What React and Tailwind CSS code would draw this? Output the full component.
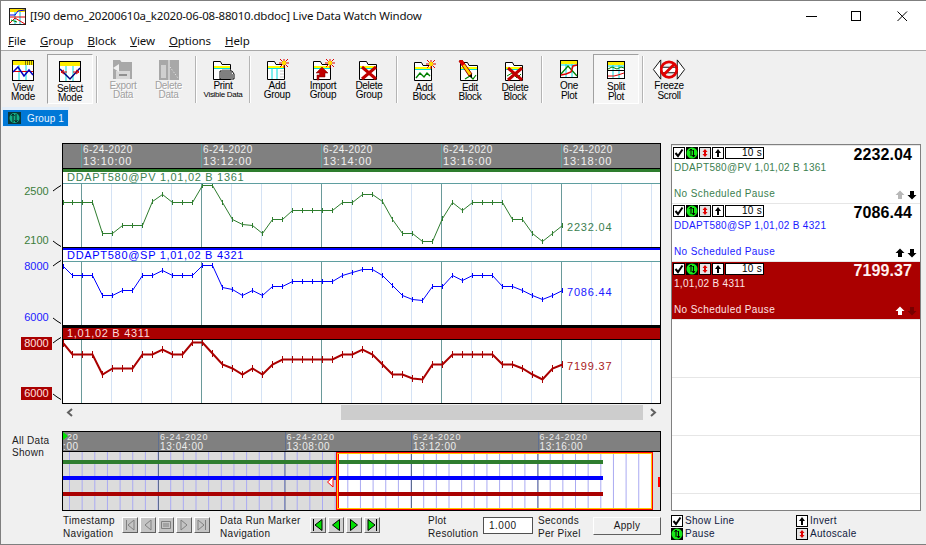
const green = [[63,202],[72,202],[82,202],[92,202],[102,233],[112,233],[122,225],[132,225],[142,225],[152,201],[162,194],[172,202],[182,202],[192,202],[202,185],[212,185],[222,202],[232,219],[242,224],[252,225],[262,233],[272,219],[282,219],[292,210],[302,210],[312,210],[322,210],[332,210],[342,202],[352,202],[362,194],[372,194],[382,201],[392,219],[402,233],[412,233],[422,241],[432,241],[442,218],[452,202],[462,210],[472,202],[482,202],[492,202],[502,202],[512,219],[522,219],[532,233],[542,241],[552,233],[562,225]];
const blue = [[63,266],[72,275],[82,275],[92,275],[102,295],[112,295],[122,290],[132,290],[142,275],[152,275],[162,270],[172,275],[182,275],[192,275],[202,265],[212,265],[222,287],[232,289],[242,295],[252,290],[262,295],[272,286],[282,286],[292,281],[302,281],[312,281],[322,281],[332,281],[342,275],[352,272],[362,269],[372,269],[382,275],[392,285],[402,295],[412,299],[422,300],[432,286],[442,286],[452,275],[462,280],[472,275],[482,275],[492,275],[502,286],[512,286],[522,290],[532,295],[542,299],[552,295],[562,290]];
const red = [[63,343],[72,354],[82,354],[92,354],[102,374],[112,368],[122,368],[132,368],[142,354],[152,354],[162,349],[172,354],[182,354],[192,342],[202,342],[212,353],[222,364],[232,368],[242,374],[252,368],[262,374],[272,364],[282,359],[292,359],[302,359],[312,359],[322,359],[332,359],[342,354],[352,354],[362,349],[372,354],[382,364],[392,374],[402,374],[412,378],[422,379],[432,364],[442,364],[452,354],[462,354],[472,354],[482,354],[492,354],[502,364],[512,364],[522,368],[532,374],[542,379],[552,368],[562,364]];

const minor = [];
for (let x = 81; x < 660; x += 30) minor.push(x);
const major = [81, 201, 321, 441, 561];

function Plot({ data, top, color, width, tick, value, valueClass, valueColor }) {
  const pts = data.map(([x, y]) => `${x - 62.5},${y - top + 0.5}`).join(" ");
  const ticks = data.map(([x, y]) => `M${x - 62.5} ${y - top - tick}V${y - top + tick + 1}`).join("");
  return (
    <div className="relative h-[63px] bg-white">
      <svg width="597" height="63" className="block">
        {minor.map((x) => (
          <line key={x} x1={x - 62.5} x2={x - 62.5} y1="0" y2="63" stroke="#d4e2f4" />
        ))}
        {major.map((x) => (
          <line key={x} x1={x - 62.5} x2={x - 62.5} y1="0" y2="63" stroke="#6a9a9a" />
        ))}
        <polyline points={pts} fill="none" stroke={color} strokeWidth={width} />
        <path d={ticks} fill="none" stroke={color} strokeWidth="1" />
      </svg>
      <span className={`absolute left-[504px] h-[12px] leading-[12px] text-[11px] tracking-[0.8px] ${valueClass} ${valueColor}`}>{value}</span>
    </div>
  );
}

function Leader({ up }) {
  return (
    <svg width="10" height="13" className="shrink-0">
      {up ? <polyline points="1,6 5,3 9,0.5" fill="none" stroke="#000" /> : <polyline points="1,7 5,10 9,12.5" fill="none" stroke="#000" />}
    </svg>
  );
}

function AxisLabel({ text, up, boxed, color }) {
  return (
    <div className="flex justify-end">
      <span className={`w-[31px] h-[13px] leading-[13px] text-center text-[11px] ${boxed ? "bg-[#aa0000] text-[#ffe0e0]" : color}`}>{text}</span>
      <Leader up={up} />
    </div>
  );
}

function TimeCell({ date, time, last }) {
  return (
    <div className={`border-l border-[#5f9ea0] pl-px text-[#f0f0f0] ${last ? "flex-1" : "w-[120px]"}`}>
      <div className="text-[10px] leading-[12px] tracking-[0.45px]">{date}</div>
      <div className="text-[11px] leading-[11px] tracking-[0.8px]">{time}</div>
    </div>
  );
}

function MiniCell({ date, time, last }) {
  return (
    <div className={`border-l border-[#60708f] pl-px text-[#ececec] ${last ? "flex-1" : "w-[126.5px]"}`}>
      <div className="text-[9px] leading-[10px] tracking-[0.8px]">{date}</div>
      <div className="text-[10px] leading-[9px] tracking-[0.6px]">{time}</div>
    </div>
  );
}

const Frame = ({ children, w = 24, h = 22 }) => (
  <svg width={w} height={h} viewBox={`0 0 ${w} ${h}`} className="shrink-0">{children}</svg>
);

const Spark = ({ x = 19, y = 4 }) => (
  <g>
    <path d={`M${x - 4} ${y - 4}L${x + 4} ${y + 4}M${x + 4} ${y - 4}L${x - 4} ${y + 4}M${x} ${y - 5}V${y + 5}M${x - 5} ${y}H${x + 5}`} stroke="#e00000" strokeWidth="1" />
    <circle cx={x} cy={y} r="2.2" fill="#ffe000" />
  </g>
);

const Folder = ({ children, stroke = "#000" }) => (
  <g>
    <path d="M2.5 20.5V2.5H9.5L11 5.5H19.5V20.5Z" fill="#fff" stroke={stroke} />
    <rect x="3" y="7" width="16" height="2" fill="#ffff00" />
    <rect x="3" y="9" width="16" height="1" fill="#00e0e0" />
    {children}
  </g>
);

const XMark = () => <path d="M5 8L19 20M19 8L5 20" stroke="#c00000" strokeWidth="3" />;

const IconView = () => (
  <Frame>
    <rect x="1.5" y="0.5" width="21" height="20" fill="#fff" stroke="#000" />
    <rect x="2" y="1" width="20" height="4" fill="#ffee00" />
    <path d="M14 2H21M14 4H21" stroke="#000" strokeDasharray="1 1" />
    <path d="M8 5V20M15 5V20" stroke="#00dcdc" />
    <path d="M2 11.5H22" stroke="#e00000" />
    <polyline points="2,12 7,7 13,16 18,10 22,15" fill="none" stroke="#0000c0" strokeWidth="1.5" />
  </Frame>
);
const IconSelect = () => (
  <Frame>
    <rect x="1.5" y="0.5" width="21" height="20" fill="#fff" stroke="#000" />
    <rect x="2" y="1" width="20" height="4" fill="#ffee00" />
    <path d="M8 5V20M15 5V20" stroke="#00dcdc" />
    <polyline points="2,8 12,18 22,7" fill="none" stroke="#000080" strokeWidth="1.5" />
    <path d="M3 11H9M6 9L3 11L6 13M21 11H15M18 9L21 11L18 13" fill="none" stroke="#e00000" />
  </Frame>
);
const IconExport = () => (
  <Frame>
    <path d="M2 20V1H9L10.5 3H21V20Z" fill="#a8a8a8" />
    <rect x="5" y="12" width="14" height="8" fill="#d8d8d8" />
    <rect x="8" y="15" width="8" height="2" fill="#909090" />
    <path d="M2 9L8 5V13Z" fill="#f0f0f0" />
  </Frame>
);
const IconDelData = () => (
  <Frame>
    <rect x="2" y="1" width="20" height="20" fill="#a8a8a8" />
    <rect x="4" y="6" width="5" height="13" fill="#d0d0d0" />
    <path d="M12 1V21" stroke="#f0f0f0" />
    <path d="M13 8L21 19" stroke="#f0f0f0" strokeDasharray="1 2" />
  </Frame>
);
const IconPrint = () => (
  <Frame>
    <Folder />
    <path d="M9 12H21L23 15V20H9Z" fill="#fff" stroke="#000" />
    <path d="M10 14H21M10 16H22M10 18H22" stroke="#000" />
    <path d="M11 11H20" stroke="#808080" />
  </Frame>
);
const IconAddGroup = () => (
  <Frame>
    <Folder>
      <path d="M7 10V20M12 10V20" stroke="#00e0e0" />
      <path d="M15 12H19M15 15H19M15 18H19" stroke="#c8c8c8" />
    </Folder>
    <Spark />
  </Frame>
);
const IconImport = () => (
  <Frame>
    <Folder />
    <path d="M11 8L17 14H14V18H8V21H6V16H8.5V14H5Z" fill="#c00000" stroke="#700000" strokeWidth="0.5" />
    <Spark />
  </Frame>
);
const IconDelGroup = () => (
  <Frame>
    <Folder />
    <XMark />
  </Frame>
);
const IconAddBlock = () => (
  <Frame>
    <Folder>
      <polyline points="4,18 8,13 12,17 15,13 18,16" fill="none" stroke="#008000" strokeWidth="1.4" />
    </Folder>
    <Spark />
  </Frame>
);
const IconEditBlock = () => (
  <Frame>
    <Folder>
      <polyline points="7,19 12,16 15,19 18,15" fill="none" stroke="#008000" strokeWidth="1.2" />
    </Folder>
    <path d="M1 1L4 0L14 14L11 16Z" fill="#ffd000" stroke="#a00000" />
    <path d="M1 1L4 0L7 4L4 6Z" fill="#e00000" />
    <path d="M11 16L14 14L14 18Z" fill="#000" />
  </Frame>
);
const IconDelBlock = () => (
  <Frame>
    <Folder>
      <polyline points="4,16 9,13 14,18 18,14" fill="none" stroke="#008000" />
    </Folder>
    <XMark />
  </Frame>
);
const IconOne = () => (
  <Frame>
    <rect x="3.5" y="1.5" width="17" height="17" fill="#fff" stroke="#000" />
    <rect x="4" y="2" width="16" height="3" fill="#ffee00" />
    <path d="M9 5V18M15 5V18M4 6H20" stroke="#00dcdc" />
    <polyline points="4,15 11,7 20,17" fill="none" stroke="#008000" strokeWidth="1.3" />
    <polyline points="4,16 9,15 14,13 16,7 20,6" fill="none" stroke="#e00000" strokeWidth="1.5" />
  </Frame>
);
const IconSplit = () => (
  <Frame>
    <rect x="3.5" y="1.5" width="17" height="17" fill="#fff" stroke="#000" />
    <rect x="4" y="2" width="16" height="3" fill="#ffee00" />
    <path d="M4 6H20" stroke="#00dcdc" />
    <path d="M9 5V18M15 5V18" stroke="#00dcdc" />
    <path d="M4 10.5H20" stroke="#000" />
    <polyline points="4,9 8,7 13,9 17,7 20,8" fill="none" stroke="#008000" />
    <polyline points="4,16 10,16 14,15 20,13" fill="none" stroke="#e00000" />
  </Frame>
);
const IconFreeze = () => (
  <svg width="34" height="22" viewBox="0 0 36 24" className="shrink-0">
    <path d="M9 1L1 11.5L9 22ZM27 1L35 11.5L27 22Z" fill="#fff" stroke="#000" />
    <path d="M9 9H27V15H9Z" fill="#fff" stroke="#000" />
    <circle cx="18" cy="11.5" r="8.5" fill="none" stroke="#e00000" strokeWidth="3" />
    <path d="M12 17.5L24 5.5" stroke="#e00000" strokeWidth="3" />
  </svg>
);

function Tool({ icon, lines, box, off, small, size = "w-[46px]", pad, lead = "leading-[9px]", shift = "" }) {
  return (
    <div className={`${size} ${pad} h-[50px] shrink-0 flex flex-col items-center ${box ? "border border-t-[#a0a0a0] border-l-[#a0a0a0] border-r-white border-b-white bg-[#f6f6f6] bg-[radial-gradient(#e0e0e0_0.5px,transparent_0.5px)] bg-[length:2px_2px]" : ""}`}>
      {icon}
      <div className={`text-center text-[10px] tracking-[-0.3px] ${lead} ${shift} whitespace-nowrap ${off ? "text-[#a0a0a0] [text-shadow:1px_1px_0_#fff]" : "text-black"}`}>
        <div>{lines[0]}</div>
        <div className={small ? "text-[8px] tracking-[-0.3px]" : ""}>{lines[1]}</div>
      </div>
    </div>
  );
}

function Sep({ w }) {
  return (
    <div className={`${w} h-[50px] shrink-0 flex justify-center items-center`}>
      <div className="w-[2px] h-[47px] bg-[#b4b4b4] border-r border-white" />
    </div>
  );
}

const IconCheck = () => (
  <svg width="12" height="12" className="shrink-0 block">
    <rect x="0.5" y="0.5" width="11" height="11" fill="#fff" stroke="#000" />
    <path d="M2.5 6L5 9L9.5 2.5" fill="none" stroke="#000" strokeWidth="2" />
  </svg>
);
const IconPause = () => (
  <svg width="12" height="12" className="shrink-0 block">
    <rect width="12" height="12" fill="#000" />
    <circle cx="6" cy="6" r="5.5" fill="#18e818" />
    <path d="M5 9V2M3.5 4L5 2L6.5 4M7.5 3V10M6 8L7.5 10L9 8" fill="none" stroke="#000" />
  </svg>
);
const IconAuto = () => (
  <svg width="12" height="12" className="shrink-0 block">
    <rect x="0.5" y="0.5" width="11" height="11" fill="#e4e4e4" stroke="#000" />
    <path d="M6 2L8.5 5H3.5ZM6 10L8.5 7H3.5Z" fill="#e00000" />
    <rect x="5" y="3" width="2" height="6" fill="#e00000" />
  </svg>
);
const IconInvert = () => (
  <svg width="12" height="12" className="shrink-0 block">
    <rect x="0.5" y="0.5" width="11" height="11" fill="#fff" stroke="#000" />
    <path d="M6 2L9 6H3Z" fill="#000" />
    <rect x="5" y="5" width="2" height="5" fill="#000" />
  </svg>
);
const Arrow = ({ down, color }) => (
  <svg width="10" height="10" className="block">
    <path d={down ? "M5 9.5L0.5 5H3V1H7V5H9.5Z" : "M5 0.5L9.5 5H7V9H3V5H0.5Z"} fill={color} />
  </svg>
);

function Card({ name, value, nameCls, valueCls, upColor, downColor, bg }) {
  return (
    <div className={`h-[58px] shrink-0 border-b border-[#e6e6e6] flex flex-col pl-px pr-[8px] pt-px pb-[3px] ${bg}`}>
      <div className="h-[13px] flex items-start gap-px">
        <IconCheck />
        <IconPause />
        <IconAuto />
        <IconInvert />
        <div className="w-[39px] h-[12px] border border-black bg-white text-black text-[10px] leading-[10px] text-right pr-[1px] tracking-[0.3px]">10 s</div>
        <div className={`flex-1 text-right font-bold text-[16px] leading-[18px] tracking-[0.1px] -mt-px ${valueCls}`}>{value}</div>
      </div>
      <div className={`pl-[1px] mt-[2px] h-[12px] leading-[12px] text-[10px] tracking-[0.3px] ${nameCls}`}>{name}</div>
      <div className="mt-auto flex items-center justify-between -mr-[5px]">
        <span className={`pl-[1px] h-[12px] leading-[12px] text-[10px] tracking-[0.4px] ${nameCls}`}>No Scheduled Pause</span>
        <div className="flex gap-[2px] mt-[2px]">
          <Arrow color={upColor} />
          <Arrow down color={downColor} />
        </div>
      </div>
    </div>
  );
}

function NavBtn({ children, off }) {
  return (
    <div className={`w-[16px] h-[16px] border border-t-white border-l-white border-r-[#606060] border-b-[#606060] ${off ? "bg-[#c4c4c4]" : "bg-[#d0d0d0]"}`}>
      <svg width="14" height="14" className="block">{children}</svg>
    </div>
  );
}

function Legend({ icon, text }) {
  return (
    <div className="flex items-center gap-[2px] h-[13px] text-[10px] tracking-[0.3px] text-[#102040]">
      {icon}
      <span>{text}</span>
    </div>
  );
}

const miniMinor = [];
for (let x = 69.5; x < 660; x += 12.65) miniMinor.push(x);
const mapTop = 452;

export default function App() {
  return (
    <div className="w-[926px] h-[545px] overflow-hidden flex flex-col bg-[#f0f0f0] border-t border-l border-b border-[#7f7f7f] font-['Liberation_Sans',sans-serif] text-black">
      <div className="h-[50px] shrink-0 bg-white border-b border-[#a8a8a8] flex flex-col">
        <div className="h-[30px] flex items-center pl-[8px]">
          <svg width="17" height="17" className="shrink-0">
            <rect x="0.5" y="0.5" width="16" height="16" fill="#fff" stroke="#202020" />
            <rect x="1" y="1" width="15" height="3" fill="#ffe000" />
            <path d="M6 4V16M11 4V16" stroke="#00c8e0" />
            <path d="M1 9H16" stroke="#e00000" />
            <polyline points="1,7 6,7 9,3 16,2" fill="none" stroke="#0000e0" />
            <polyline points="1,15 6,10 11,13 16,16" fill="none" stroke="#e00000" />
            <path d="M2 12L8 14" stroke="#008000" />
          </svg>
          <span className="ml-[4px] font-['Noto_Sans',sans-serif] text-[11.5px] tracking-[-0.18px] text-[#101010] whitespace-nowrap">[I90 demo_20200610a_k2020-06-08-88010.dbdoc] Live Data Watch Window</span>
          <div className="ml-auto mr-px flex items-center">
            <div className="w-[45.5px] flex justify-center"><svg width="11" height="11"><path d="M0 5.5H11" stroke="#000" /></svg></div>
            <div className="w-[45.5px] flex justify-center"><svg width="11" height="11"><rect x="0.5" y="0.5" width="9" height="9" fill="none" stroke="#000" /></svg></div>
            <div className="w-[45.5px] flex justify-center"><svg width="11" height="11"><path d="M0.5 0.5L10 10M10 0.5L0.5 10" stroke="#000" /></svg></div>
          </div>
        </div>
        <div className="flex items-start gap-[14px] pl-[7px] font-['Noto_Sans',sans-serif] text-[11.5px] tracking-[-0.1px] leading-[19px] text-[#101010]">
          <span><u>F</u>ile</span>
          <span><u>G</u>roup</span>
          <span><u>B</u>lock</span>
          <span><u>V</u>iew</span>
          <span><u>O</u>ptions</span>
          <span><u>H</u>elp</span>
        </div>
      </div>

      <div className="h-[56px] shrink-0 flex items-start pt-[3px] -ml-px">
        <Tool icon={<IconView />} lines={["View", "Mode"]} pad="pt-[6px]" shift="mt-px" />
        <Tool icon={<IconSelect />} lines={["Select", "Mode"]} box pad="pt-[6px] ml-px" shift="mt-px" />
        <Sep w="w-[7px]" />
        <Tool icon={<IconExport />} lines={["Export", "Data"]} off pad="pt-[5px]" />
        <Tool icon={<IconDelData />} lines={["Delete", "Data"]} off pad="pt-[5px]" size="w-[45px]" />
        <Sep w="w-[9px]" />
        <Tool icon={<IconPrint />} lines={["Print", "Visible Data"]} small pad="pt-[5px]" />
        <Sep w="w-[8px]" />
        <Tool icon={<IconAddGroup />} lines={["Add", "Group"]} pad="pt-[5px]" />
        <Tool icon={<IconImport />} lines={["Import", "Group"]} pad="pt-[5px]" />
        <Tool icon={<IconDelGroup />} lines={["Delete", "Group"]} pad="pt-[5px]" />
        <Sep w="w-[9px]" />
        <Tool icon={<IconAddBlock />} lines={["Add", "Block"]} pad="pt-[6px]" shift="mt-px" />
        <Tool icon={<IconEditBlock />} lines={["Edit", "Block"]} pad="pt-[6px]" shift="mt-px" />
        <Tool icon={<IconDelBlock />} lines={["Delete", "Block"]} pad="pt-[6px]" size="w-[44px]" shift="mt-px" />
        <Sep w="w-[9px]" />
        <Tool icon={<IconOne />} lines={["One", "Plot"]} pad="pt-[5px]" lead="leading-[10px]" />
        <Tool icon={<IconSplit />} lines={["Split", "Plot"]} box pad="pt-[5px] ml-px" lead="leading-[10px]" />
        <Sep w="w-[7px]" />
        <Tool icon={<IconFreeze />} lines={["Freeze", "Scroll"]} pad="pt-[5px]" lead="leading-[10px]" />
      </div>

      <div className="ml-px w-[67px] h-[20px] shrink-0 border-t-[3px] border-x border-b border-[#e2eefa] bg-[#0078d7] flex items-center pl-[5px] gap-[6px] text-[10px] tracking-[0.1px] text-[#e8f4ff]">
        <svg width="13" height="12" className="shrink-0 block">
          <rect width="13" height="12" fill="#083838" />
          <circle cx="6.5" cy="6" r="5" fill="#14b088" />
          <path d="M5 10V2M3.5 4L5 2L6.5 4M8 2V10M6.5 8L8 10L9.5 8" fill="none" stroke="#042020" />
        </svg>
        <span>Group 1</span>
      </div>

      <div className="flex mt-[16px]">
        <div className="w-[670px] shrink-0">
          <div className="ml-[61px] w-[599px] h-[26px] border-t border-x border-b border-black bg-[#808080] flex pl-[18px]">
            <TimeCell date="6-24-2020" time="13:10:00" />
            <TimeCell date="6-24-2020" time="13:12:00" />
            <TimeCell date="6-24-2020" time="13:14:00" />
            <TimeCell date="6-24-2020" time="13:16:00" />
            <TimeCell date="6-24-2020" time="13:18:00" last />
          </div>

          <div className="flex">
            <div className="w-[61px] h-[78px] shrink-0 flex flex-col justify-between pt-[16px]">
              <AxisLabel text="2500" up color="text-[#3b7d3b]" />
              <AxisLabel text="2100" color="text-[#3b7d3b]" />
            </div>
            <div className="w-[599px] border-x border-black">
              <div className="h-[3px] bg-[#2e7d2e]" />
              <div className="h-[12px] bg-white border-b border-[#5f9ea0] pl-[4px] text-[11px] leading-[11px] tracking-[0.7px] text-[#3b8050]">DDAPT580@PV 1,01,02 B 1361</div>
              <Plot data={green} top={184} color="#2e7d2e" width={1} tick={2} value="2232.04" valueClass="top-[37px]" valueColor="text-[#3b8050]" />
            </div>
          </div>

          <div className="flex">
            <div className="w-[61px] h-[78px] shrink-0 flex flex-col justify-between pt-[13px] pb-px">
              <AxisLabel text="8000" up color="text-[#1a1aff]" />
              <AxisLabel text="6000" color="text-[#1a1aff]" />
            </div>
            <div className="w-[599px] border-x border-black">
              <div className="h-px bg-black" />
              <div className="h-[2px] bg-[#0000ff]" />
              <div className="h-[12px] bg-white border-b border-[#5f9ea0] pl-[4px] text-[11px] leading-[11px] tracking-[0.7px] text-[#0000ff]">DDAPT580@SP 1,01,02 B 4321</div>
              <Plot data={blue} top={262} color="#0000ff" width={1} tick={2} value="7086.44" valueClass="top-[24px]" valueColor="text-[#2020ff]" />
            </div>
          </div>

          <div className="flex">
            <div className="w-[61px] h-[79px] shrink-0 flex flex-col justify-between pt-[12px] pb-[4px]">
              <AxisLabel text="8000" up boxed />
              <AxisLabel text="6000" boxed />
            </div>
            <div className="w-[599px] border-x border-b border-black">
              <div className="h-[3px] bg-black" />
              <div className="h-[12px] bg-[#aa0000] border-b border-black pl-[4px] text-[11px] leading-[11px] tracking-[0.7px] text-[#ffdcdc]">1,01,02 B 4311</div>
              <Plot data={red} top={340} color="#aa0000" width={2} tick={3} value="7199.37" valueClass="top-[20px]" valueColor="text-[#aa2020]" />
            </div>
          </div>

          <div className="ml-[61px] w-[599px] h-[17px] flex items-center">
            <div className="w-[16px] flex justify-center">
              <svg width="8" height="9"><path d="M6 1L2 4.5L6 8" fill="none" stroke="#606060" strokeWidth="2" /></svg>
            </div>
            <div className="ml-[263px] w-[302px] h-[15px] bg-[#cdcdcd]" />
            <div className="ml-[2px] w-[16px] flex justify-center">
              <svg width="8" height="9"><path d="M2 1L6 4.5L2 8" fill="none" stroke="#606060" strokeWidth="2" /></svg>
            </div>
          </div>

          <div className="flex mt-[10px]">
            <div className="w-[61px] shrink-0 pl-[11px] pt-[4px] text-[10px] leading-[12px] tracking-[0.3px] text-[#202020]">All Data<br />Shown</div>
            <div className="w-[599px] h-[80px] border border-black flex flex-col">
              <div className="h-[20px] shrink-0 bg-[#808080] border-b border-black flex relative">
                <svg width="5" height="8" className="absolute left-0 top-0"><path d="M0 0L5 4L0 8Z" fill="#00e000" /></svg>
                <div className="w-[95px] text-[#ececec]">
                  <div className="text-[9px] leading-[10px] tracking-[0.8px] pl-[4px]">20</div>
                  <div className="text-[10px] leading-[9px] tracking-[0.6px]">:00</div>
                </div>
                <MiniCell date="6-24-2020" time="13:04:00" />
                <MiniCell date="6-24-2020" time="13:08:00" />
                <MiniCell date="6-24-2020" time="13:12:00" />
                <MiniCell date="6-24-2020" time="13:16:00" last />
              </div>
              <svg width="597" height="58" className="block">
                <rect width="597" height="58" fill="#dcdcdc" />
                <rect x="273" y="0" width="317" height="58" fill="#fff" />
                {miniMinor.map((x) => (
                  <line key={x} x1={x - 63} x2={x - 63} y1="0" y2="58" stroke="#aaaaf2" />
                ))}
                {[158.5, 285, 411.5, 538].map((x) => (
                  <line key={x} x1={x - 63} x2={x - 63} y1="0" y2="58" stroke="#5c6c90" />
                ))}
                <rect x="0" y={460 - mapTop} width="540" height="4" fill="#2e7d2e" />
                <rect x="0" y={476 - mapTop} width="540" height="4" fill="#0000ff" />
                <rect x="0" y={492 - mapTop} width="540" height="4" fill="#aa0000" />
                <rect x="273.5" y="0.5" width="316" height="57" fill="none" stroke="#ff0000" strokeWidth="1" />
                <rect x="274.5" y="1.5" width="314" height="55" fill="none" stroke="#ffc800" strokeWidth="1" />
                <path d="M275.5 2V56" stroke="#ff0000" />
                <path d="M270 25L264.5 30L270 35Z" fill="#fff" stroke="#ff0000" />
                <path d="M596 25V35" stroke="#ff0000" strokeWidth="2" />
              </svg>
            </div>
          </div>

          <div className="flex items-start mt-[3px] ml-[62px] text-[10px] leading-[13px] tracking-[0.3px] text-[#181818]">
            <div className="w-[59px] whitespace-nowrap">Timestamp<br />Navigation</div>
            <div className="flex gap-[2px] mt-[3px]">
              <NavBtn off><path d="M3.5 2V12M11 2V12L5 7Z" fill="none" stroke="#808080" /></NavBtn>
              <NavBtn off><path d="M10 2V12L4 7Z" fill="none" stroke="#808080" /></NavBtn>
              <NavBtn off><path d="M2.5 3.5H11.5V10.5H2.5ZM4 6H10M4 8H10" fill="none" stroke="#808080" /></NavBtn>
              <NavBtn off><path d="M4 2V12L10 7Z" fill="none" stroke="#808080" /></NavBtn>
              <NavBtn off><path d="M10.5 2V12M3 2V12L9 7Z" fill="none" stroke="#808080" /></NavBtn>
            </div>
            <div className="ml-[10px] w-[90px] whitespace-nowrap">Data Run Marker<br />Navigation</div>
            <div className="flex gap-[2px] mt-[3px]">
              <NavBtn><path d="M2.5 1V13" stroke="#000" /><path d="M11 1.5V12.5L4 7Z" fill="#00e000" stroke="#000" /></NavBtn>
              <NavBtn><path d="M10.5 1.5V12.5L3.5 7Z" fill="#00e000" stroke="#000" /></NavBtn>
              <NavBtn><path d="M3.5 1.5V12.5L10.5 7Z" fill="#00e000" stroke="#000" /></NavBtn>
              <NavBtn><path d="M11.5 1V13" stroke="#000" /><path d="M3 1.5V12.5L10 7Z" fill="#00e000" stroke="#000" /></NavBtn>
            </div>
            <div className="ml-[48px] w-[55px] whitespace-nowrap">Plot<br />Resolution</div>
            <div className="w-[50px] h-[17px] mt-[3px] border border-[#505050] bg-white pl-[5px] text-[10px] leading-[15px] tracking-[0.5px]">1.000</div>
            <div className="ml-[5px] w-[55px] whitespace-nowrap">Seconds<br />Per Pixel</div>
            <div className="w-[68px] h-[18px] mt-[3px] border border-t-white border-l-white border-r-[#606060] border-b-[#606060] bg-[#f0f0f0] text-center text-[10px] leading-[16px]">Apply</div>
          </div>
        </div>

        <div className="w-[250px] shrink-0 flex flex-col">
          <div className="h-[367px] mt-px border border-[#808080] bg-white flex flex-col overflow-hidden">
            <div className="h-px shrink-0 bg-[#e6e6e6]" />
            <Card name="DDAPT580@PV 1,01,02 B 1361" value="2232.04" nameCls="text-[#3b8050]" valueCls="text-black" upColor="#b8b8b8" downColor="#000" bg="bg-white" />
            <Card name="DDAPT580@SP 1,01,02 B 4321" value="7086.44" nameCls="text-[#1a1aff]" valueCls="text-black" upColor="#000" downColor="#000" bg="bg-white" />
            <Card name="1,01,02 B 4311" value="7199.37" nameCls="text-[#ffe4e4]" valueCls="text-[#fff0f0]" upColor="#fff" downColor="#780000" bg="bg-[#aa0000]" />
            <div className="h-[58px] shrink-0 border-b border-[#e6e6e6]" />
            <div className="h-[58px] shrink-0 border-b border-[#e6e6e6]" />
            <div className="h-[58px] shrink-0 border-b border-[#e6e6e6]" />
          </div>
          <div className="grid grid-cols-[125px_125px] mt-[3px]">
            <Legend icon={<IconCheck />} text="Show Line" />
            <Legend icon={<IconInvert />} text="Invert" />
            <Legend icon={<IconPause />} text="Pause" />
            <Legend icon={<IconAuto />} text="Autoscale" />
          </div>
        </div>
      </div>
    </div>
  );
}
